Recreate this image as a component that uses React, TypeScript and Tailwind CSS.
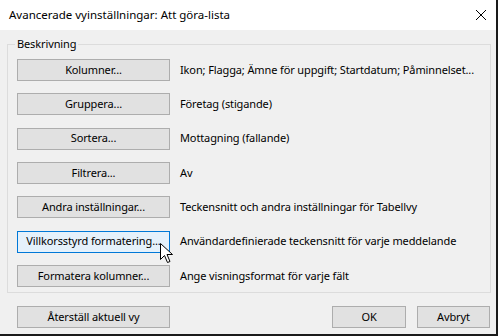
import React from "react";

const rows: [string, string][] = [
  ["Kolumner...", "Ikon; Flagga; Ämne för uppgift; Startdatum; Påminnelset..."],
  ["Gruppera...", "Företag (stigande)"],
  ["Sortera...", "Mottagning (fallande)"],
  ["Filtrera...", "Av"],
  ["Andra inställningar...", "Teckensnitt och andra inställningar för Tabellvy"],
  ["Villkorsstyrd formatering...", "Användardefinierade teckensnitt för varje meddelande"],
  ["Formatera kolumner...", "Ange visningsformat för varje fält"],
];

function Btn({ label, hover, className }: { label: string; hover?: boolean; className?: string }) {
  return (
    <div
      className={
        "h-[22px] flex items-center justify-center border text-[11px] tracking-[-0.12px] text-black shrink-0 whitespace-nowrap overflow-hidden " +
        (hover ? "bg-[#e5f1fb] border-[#0078d7] " : "bg-[#e1e1e1] border-[#adadad] ") +
        (className ?? "")
      }
    >
      {label}
    </div>
  );
}

export default function App() {
  return (
    <div
      className="w-[498px] h-[336px] bg-[#f0f0f0] border-r-2 border-b-2 border-[#1a1a1a] flex flex-col text-black"
      style={{ fontFamily: '"Noto Sans", "Segoe UI", sans-serif' }}
    >
      <div className="h-[30px] bg-white flex items-center justify-between pl-[9px] pr-[8px] shrink-0">
        <span className="text-[11.5px]">Avancerade vyinställningar: Att göra-lista</span>
        <svg width="12" height="12" viewBox="0 0 12 12" className="mr-[1px]">
          <path d="M1 1 L11 11 M11 1 L1 11" stroke="#000" strokeWidth="1" />
        </svg>
      </div>
      <div className="relative mt-[14px] ml-[7px] w-[484px] h-[249px] border border-[#dcdcdc] pt-[14px] pl-[9px] flex flex-col gap-y-[12.33px]">
        <span className="absolute left-[7px] top-[-9px] px-[2px] bg-[#f0f0f0] text-[11px] tracking-[-0.12px] leading-[16px]">
          Beskrivning
        </span>
        {rows.map(([b, t], i) => (
          <div key={b} className="flex items-center gap-[10px] relative">
            <Btn label={b} hover={i === 5} className="w-[153px]" />
            <span className="text-[11px] tracking-[-0.12px] whitespace-nowrap">{t}</span>
            {i === 5 && (
              <svg
                className="absolute left-[143px] top-[12px]"
                width="14"
                height="21"
                viewBox="0 0 14 21"
              >
                <path
                  d="M0.5 0.5 L0.5 16.5 L4.5 12.5 L7.5 19.5 L10 18.5 L7 11.5 L12.5 11.5 Z"
                  fill="#fff"
                  stroke="#000"
                  strokeWidth="1"
                />
              </svg>
            )}
          </div>
        ))}
      </div>
      <div className="mt-[13px] pl-[17px] pr-[6px] flex items-center">
        <Btn label="Återställ aktuell vy" className="w-[153px]" />
        <div className="ml-auto flex gap-[11px]">
          <Btn label="OK" className="w-[74px]" />
          <Btn label="Avbryt" className="w-[73px]" />
        </div>
      </div>
    </div>
  );
}
